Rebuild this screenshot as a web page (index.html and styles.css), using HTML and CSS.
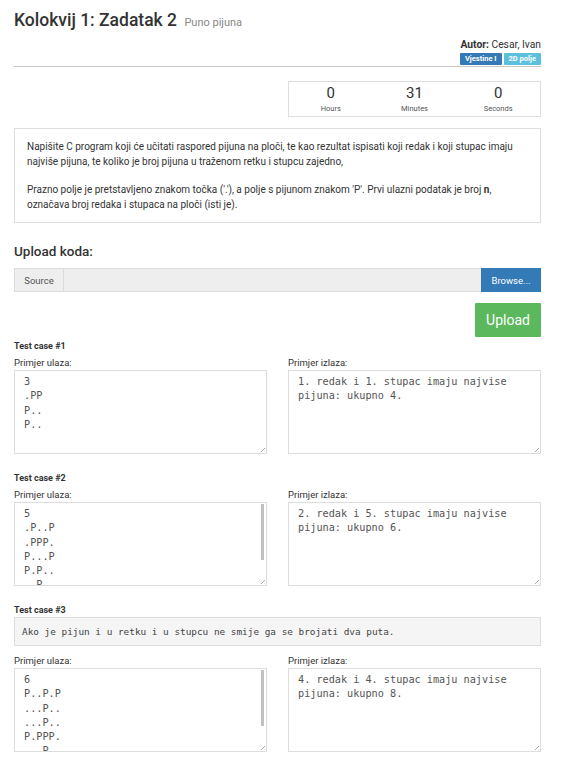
FILE: index.html
```html
<!DOCTYPE html>
<html>
<head>
<meta charset="utf-8">
<link rel="stylesheet" href="styles.css">
</head>
<body>
<div class="page">
  <div class="head">
    <h1 class="title">Kolokvij 1: Zadatak 2 <small>Puno pijuna</small></h1>
    <div class="meta">
      <div class="author"><b>Autor:</b> Cesar, Ivan</div>
      <div class="badges"><span class="badge b-dark">Vjestine I</span><span class="badge b-light">2D polje</span></div>
    </div>
  </div>
  <div class="timer-row">
    <div class="timer">
      <div class="tcol"><div class="num">0</div><div class="lbl">Hours</div></div>
      <div class="tcol"><div class="num">31</div><div class="lbl">Minutes</div></div>
      <div class="tcol"><div class="num">0</div><div class="lbl">Seconds</div></div>
    </div>
  </div>
  <div class="desc">
    <p>Napišite C program koji će učitati raspored pijuna na ploči, te kao rezultat ispisati koji redak i koji stupac imaju najviše pijuna, te koliko je broj pijuna u traženom retku i stupcu zajedno,</p>
    <p>Prazno polje je pretstavljeno znakom točka ('.'), a polje s pijunom znakom 'P'. Prvi ulazni podatak je broj <b>n</b>, označava broj redaka i stupaca na ploči (isti je).</p>
  </div>
  <h2 class="upload-title">Upload koda:</h2>
  <div class="input-group">
    <span class="addon">Source</span>
    <span class="field"></span>
    <span class="browse">Browse...</span>
  </div>
  <div class="upload-row"><span class="btn-upload">Upload</span></div>

  <div class="case">
    <div class="case-title">Test case #1</div>
    <div class="cols">
      <div class="col"><div class="lab">Primjer ulaza:</div><div class="ta">3
.PP
P..
P..</div></div>
      <div class="col"><div class="lab">Primjer izlaza:</div><div class="ta">1. redak i 1. stupac imaju najvise
pijuna: ukupno 4.</div></div>
    </div>
  </div>

  <div class="case">
    <div class="case-title">Test case #2</div>
    <div class="cols">
      <div class="col"><div class="lab">Primjer ulaza:</div><div class="ta scroll">5
.P..P
.PPP.
P...P
P.P..
..P..<span class="sb"></span></div></div>
      <div class="col"><div class="lab">Primjer izlaza:</div><div class="ta">2. redak i 5. stupac imaju najvise
pijuna: ukupno 6.</div></div>
    </div>
  </div>

  <div class="case">
    <div class="case-title">Test case #3</div>
    <div class="note">Ako je pijun i u retku i u stupcu ne smije ga se brojati dva puta.</div>
    <div class="cols">
      <div class="col"><div class="lab">Primjer ulaza:</div><div class="ta scroll">6
P..P.P
...P..
...P..
P.PPP.
...P..<span class="sb"></span></div></div>
      <div class="col"><div class="lab">Primjer izlaza:</div><div class="ta">4. redak i 4. stupac imaju najvise
pijuna: ukupno 8.</div></div>
    </div>
  </div>
</div>
</body>
</html>
```

FILE: styles.css
```css
html, body { margin: 0; padding: 0; background: #fff; }
body { font-family: Roboto, "Liberation Sans", sans-serif; color: #333; }
.page { width: 527px; margin-left: 14px; }

.head { border-bottom: 1px solid #c8c8c8; padding-bottom: 1px; }
.title { margin: 0; padding-top: 8px; font-size: 17.5px; font-weight: 500; line-height: 24px; color: #333; }
.title small { font-size: 11px; font-weight: 400; color: #888; margin-left: 3px; }
.meta { display: flex; flex-direction: column; align-items: flex-end; margin-top: 3px; }
.author { font-size: 10.3px; line-height: 14px; color: #333; }
.author b { font-weight: 700; }
.badges { display: flex; gap: 2px; margin-top: 1px; }
.badge { font-size: 7.5px; font-weight: 700; color: #fff; padding: 0 5px; line-height: 12px; height: 12px; border-radius: 1px; }
.b-dark { background: #337ab7; }
.b-light { background: #5bc0de; }

.timer-row { display: flex; justify-content: flex-end; margin-top: 14px; }
.timer { width: 251px; height: 34px; border: 1px solid #ddd; display: flex; }
.tcol { flex: 1; text-align: center; }
.num { font-size: 15px; line-height: 16px; margin-top: 3px; color: #333; }
.lbl { font-size: 7.5px; line-height: 10px; margin-top: 3px; color: #555; }

.desc { margin-top: 11px; border: 1px solid #ddd; padding: 11px 12px 10px; font-size: 10px; line-height: 14.5px; color: #333; }
.desc p { margin: 0; }
.desc p + p { margin-top: 14px; }

.upload-title { margin: 19px 0 0; font-size: 13.5px; font-weight: 500; line-height: 18px; color: #333; }
.input-group { display: flex; height: 24px; margin-top: 8px; }
.addon { width: 48px; background: #eee; border: 1px solid #ddd; font-size: 9.5px; color: #555; display: flex; align-items: center; justify-content: center; }
.field { flex: 1; background: #eee; border-top: 1px solid #ddd; border-bottom: 1px solid #ddd; }
.browse { width: 60px; background: #337ab7; color: #fff; font-size: 9.5px; display: flex; align-items: center; justify-content: center; }
.upload-row { display: flex; justify-content: flex-end; margin-top: 11px; }
.btn-upload { width: 66px; height: 34px; background: #5cb85c; color: #fff; font-size: 14px; display: flex; align-items: center; justify-content: center; border-radius: 1px; }

.case { margin-top: 1px; }
.case-title { font-size: 9px; font-weight: 700; line-height: 14px; color: #333; margin-top: 2px; }
.cols { display: grid; grid-template-columns: 253px 253px; column-gap: 21px; }
.lab { font-size: 9.5px; line-height: 13px; color: #333; margin-top: 3px; margin-bottom: 1px; }
.ta { position: relative; box-sizing: border-box; height: 84px; border: 1px solid #ddd; padding: 4px 9px; font-family: "DejaVu Sans Mono", monospace; font-size: 10.2px; line-height: 14.3px; color: #555; white-space: pre; overflow: hidden; }
.ta::after { content: ""; position: absolute; right: 1px; bottom: 1px; width: 4px; height: 4px; background: linear-gradient(135deg, transparent 45%, #aaa 50%, transparent 60%, transparent 75%, #aaa 80%, transparent 90%); }
.scroll .sb { position: absolute; right: 2px; top: 1px; width: 3px; height: 56px; background: #c1c1c1; }
.case + .case { margin-top: 17px; }
.note { margin-top: 0; margin-bottom: 5px; height: 29px; box-sizing: border-box; background: #f5f5f5; border: 1px solid #ddd; padding: 0 7px; display: flex; align-items: center; font-family: "DejaVu Sans Mono", monospace; font-size: 9.4px; color: #444; }
```
